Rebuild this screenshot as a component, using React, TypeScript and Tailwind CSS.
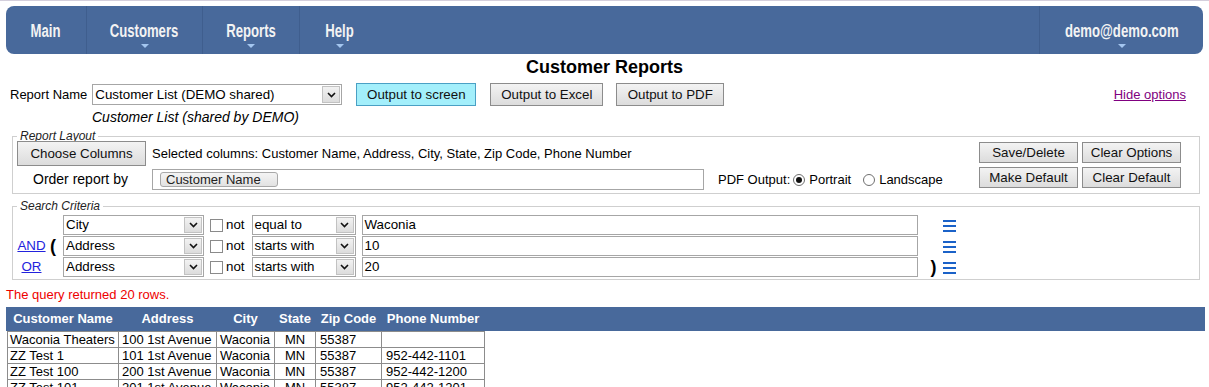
import React from "react";

function Chevron() {
  return (
    <svg width="9" height="6" viewBox="0 0 9 6">
      <path d="M1 1l3.5 3.5L8 1" stroke="#111" strokeWidth="1.6" fill="none" />
    </svg>
  );
}

function Sel({ text, className = "" }: { text: string; className?: string }) {
  return (
    <div className={`flex border border-[#a6a6a6] bg-white ${className}`}>
      <div className="flex flex-1 items-center overflow-hidden whitespace-nowrap pl-[2px] text-[13.33px] leading-none">
        {text}
      </div>
      <div className="m-px flex w-[18px] items-center justify-center border border-[#c2c2c2] bg-[linear-gradient(#f2f2f2,#dcdcdc)]">
        <Chevron />
      </div>
    </div>
  );
}

function Btn({
  children,
  className = "",
  cyan = false,
}: {
  children: React.ReactNode;
  className?: string;
  cyan?: boolean;
}) {
  return (
    <button
      type="button"
      className={`flex items-center justify-center whitespace-nowrap border text-[13.33px] leading-none text-[#111] ${
        cyan
          ? "border-[#4aa0c4] bg-[#a3effb]"
          : "border-[#8c8c8c] bg-[linear-gradient(#f3f3f3,#dcdcdc)]"
      } ${className}`}
    >
      {children}
    </button>
  );
}

function NavItem({ label, arrow = false, className = "" }: { label: string; arrow?: boolean; className?: string }) {
  return (
    <div className={`flex shrink-0 flex-col items-center pt-[14px] ${className}`}>
      <div className="scale-x-[0.73] whitespace-nowrap leading-[22px]">{label}</div>
      {arrow && (
        <div className="mt-[2px] h-0 w-0 border-x-[4px] border-t-[4px] border-x-transparent border-t-[#a4c6ef]" />
      )}
    </div>
  );
}

function Hamburger() {
  return (
    <svg width="13" height="13" viewBox="0 0 13 13">
      <rect x="0" y="1" width="13" height="2" fill="#1b62c8" />
      <rect x="0" y="6" width="13" height="2" fill="#1b62c8" />
      <rect x="0" y="11" width="13" height="2" fill="#1b62c8" />
    </svg>
  );
}

function Radio({ checked = false }: { checked?: boolean }) {
  return (
    <div className="flex h-[12px] w-[12px] items-center justify-center rounded-full border border-[#6f6f6f] bg-white">
      {checked && <div className="h-[6px] w-[6px] rounded-full bg-[#111]" />}
    </div>
  );
}

function CritRow({
  conj,
  open,
  close,
  field,
  op,
  value,
  className = "",
}: {
  conj?: string;
  open?: boolean;
  close?: boolean;
  field: string;
  op: string;
  value: string;
  className?: string;
}) {
  return (
    <div className={`flex h-[20px] items-center ${className}`}>
      <div className="w-[29px] text-center text-[13.33px]">
        {conj && <a className="text-[#2222dd] underline">{conj}</a>}
      </div>
      <div className="w-[17px] pl-[4px] text-[18px] font-bold leading-none">{open ? "(" : ""}</div>
      <Sel text={field} className="h-[20px] w-[141px]" />
      <div className="ml-[6px] h-[13px] w-[13px] border border-[#8a8a8a] bg-white" />
      <span className="ml-[3px] text-[13.33px]">not</span>
      <Sel text={op} className="ml-[7px] h-[20px] w-[104px]" />
      <div className="ml-[6px] flex h-[20px] w-[556px] items-center border border-[#a6a6a6] bg-white pl-[2px] text-[13.33px]">
        {value}
      </div>
      <div className="flex w-[25px] justify-end pr-[6px] text-[18px] font-bold leading-none">{close ? ")" : ""}</div>
      <Hamburger />
    </div>
  );
}

const rows = [
  ["Waconia Theaters", "100 1st Avenue", "Waconia", "MN", "55387", ""],
  ["ZZ Test 1", "101 1st Avenue", "Waconia", "MN", "55387", "952-442-1101"],
  ["ZZ Test 100", "200 1st Avenue", "Waconia", "MN", "55387", "952-442-1200"],
  ["ZZ Test 101", "201 1st Avenue", "Waconia", "MN", "55387", "952-442-1201"],
];

export default function App() {
  return (
    <div className="h-[387px] w-[1209px] overflow-hidden bg-white font-['Liberation_Sans',Arial,sans-serif] text-[13px] text-black">
      <div className="h-px bg-[#d4cfdc]" />
      <nav className="mx-[6px] mt-[5px] flex h-[48px] rounded-[8px] bg-[#48699b] text-[18px] font-bold text-[#f3f3f3]">
        <NavItem label="Main" className="w-[81px] border-r border-[#3f5e8e]" />
        <NavItem label="Customers" arrow className="w-[116px] border-r border-[#3f5e8e]" />
        <NavItem label="Reports" arrow className="w-[97px] border-r border-[#3f5e8e]" />
        <NavItem label="Help" arrow className="w-[79px]" />
        <div className="flex-1" />
        <NavItem label="demo@demo.com" arrow className="w-[164px] border-l border-[#3f5e8e]" />
      </nav>

      <div className="mt-[3px] text-center text-[18px] font-bold leading-[20px]">Customer Reports</div>

      <div className="mt-[6px] flex h-[23px] items-center pl-[10px] pr-[23px]">
        <span className="text-[13px]">Report Name</span>
        <Sel text="Customer List (DEMO shared)" className="ml-[5px] h-[21px] w-[250px]" />
        <Btn cyan className="ml-[14px] h-[23px] w-[120px]">
          Output to screen
        </Btn>
        <Btn className="ml-[14px] h-[23px] w-[113px]">Output to Excel</Btn>
        <Btn className="ml-[13px] h-[23px] w-[108px]">Output to PDF</Btn>
        <a className="ml-auto text-[13px] text-[#800080] underline">Hide options</a>
      </div>

      <div className="mt-[3px] pl-[92px] text-[14px] italic leading-[16px]">Customer List (shared by DEMO)</div>

      <fieldset className="ml-[12px] mr-[9px] mt-[6px] border border-[#cfcfcf] px-[4px] pb-[3px]">
        <legend className="px-[3px] text-[12px] italic leading-[10px] text-[#222]">Report Layout</legend>
        <div className="flex">
          <div className="flex-1">
            <div className="flex h-[25px] items-center">
              <Btn className="h-[25px] w-[129px] bg-[linear-gradient(#ececec,#d6d6d6)]">Choose Columns</Btn>
              <span className="ml-[6px] text-[13px]">
                Selected columns: Customer Name, Address, City, State, Zip Code, Phone Number
              </span>
            </div>
            <div className="mt-[3px] flex h-[21px] items-center">
              <span className="w-[135px] pl-[16px] text-[14px]">Order report by</span>
              <div className="flex h-[21px] w-[552px] items-center border border-[#a6a6a6] bg-white">
                <div className="ml-[7px] flex h-[15px] w-[118px] items-center rounded-[3px] border border-[#a8a8a8] bg-[linear-gradient(#f4f4f4,#e2e2e2)] pl-[5px] text-[13px] text-[#222]">
                  Customer Name
                </div>
              </div>
              <span className="ml-[14px] text-[13px]">PDF Output:</span>
              <div className="ml-[3px]">
                <Radio checked />
              </div>
              <span className="ml-[4px] text-[13px]">Portrait</span>
              <div className="ml-[12px]">
                <Radio />
              </div>
              <span className="ml-[4px] text-[13px]">Landscape</span>
            </div>
          </div>
          <div className="mr-[14px] mt-[1px] grid grid-cols-2 gap-x-[4px] gap-y-[4px] self-start">
            <Btn className="h-[21px] w-[99px]">Save/Delete</Btn>
            <Btn className="h-[21px] w-[99px]">Clear Options</Btn>
            <Btn className="h-[21px] w-[99px]">Make Default</Btn>
            <Btn className="h-[21px] w-[99px]">Clear Default</Btn>
          </div>
        </div>
      </fieldset>

      <fieldset className="ml-[12px] mr-[9px] mt-[7px] border border-[#cfcfcf] px-[4px] pb-[2px] pt-[4px]">
        <legend className="px-[3px] text-[12px] italic leading-[10px] text-[#222]">Search Criteria</legend>
        <CritRow field="City" op="equal to" value="Waconia" />
        <CritRow conj="AND" open field="Address" op="starts with" value="10" className="mt-px" />
        <CritRow conj="OR" close field="Address" op="starts with" value="20" className="mt-px" />
      </fieldset>

      <div className="mt-[7px] pl-[6px] text-[13px] leading-[15px] text-[#ee0000]">The query returned 20 rows.</div>

      <div className="ml-[6px] mr-[4px] mt-[5px] bg-[linear-gradient(to_bottom,#48699b_0px,#48699b_24px,#ffffff_24px)]">
        <table className="ml-px w-[477px] table-fixed border-collapse">
          <colgroup>
            <col className="w-[111px]" />
            <col className="w-[98px]" />
            <col className="w-[58px]" />
            <col className="w-[41px]" />
            <col className="w-[66px]" />
            <col className="w-[103px]" />
          </colgroup>
          <thead>
            <tr className="h-[24px] text-[13px] font-bold text-white">
              <th className="p-0 text-center">Customer Name</th>
              <th className="p-0 text-center">Address</th>
              <th className="p-0 text-center">City</th>
              <th className="p-0 text-center">State</th>
              <th className="p-0 text-center">Zip Code</th>
              <th className="whitespace-nowrap p-0 text-center">Phone Number</th>
            </tr>
          </thead>
          <tbody>
            {rows.map((r, i) => (
              <tr key={i} className="h-[16px] text-[13px] leading-[15px]">
                <td className="whitespace-nowrap border border-[#8c8c8c] px-[2px] py-0">{r[0]}</td>
                <td className="whitespace-nowrap border border-[#8c8c8c] px-[3px] py-0">{r[1]}</td>
                <td className="whitespace-nowrap border border-[#8c8c8c] px-[3px] py-0">{r[2]}</td>
                <td className="whitespace-nowrap border border-[#8c8c8c] px-[3px] py-0 text-center">{r[3]}</td>
                <td className="whitespace-nowrap border border-[#8c8c8c] px-[4px] py-0">{r[4]}</td>
                <td className="whitespace-nowrap border border-[#8c8c8c] px-[4px] py-0">{r[5]}</td>
              </tr>
            ))}
          </tbody>
        </table>
      </div>
    </div>
  );
}
